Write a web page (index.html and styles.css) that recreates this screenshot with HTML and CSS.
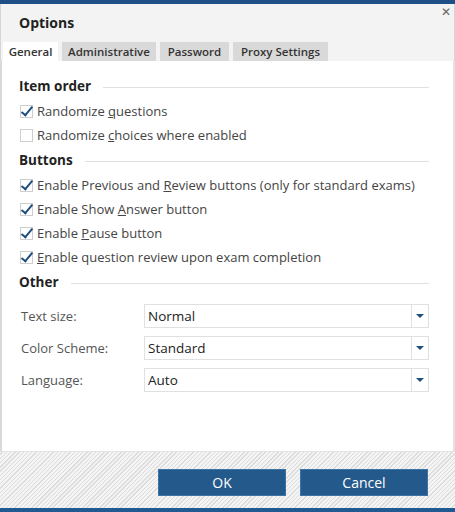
FILE: index.html
```html
<!DOCTYPE html>
<html lang="en">
<head>
    <meta charset="UTF-8">
    <meta name="viewport" content="width=device-width, initial-scale=1.0">
    <title>Options</title>
    <link rel="stylesheet" href="styles.css">
</head>
<body>

    <div class="topbar"></div>

    <div class="dialog">
        <!-- Header with title and tabs -->
        <div class="header">
            <div class="title-row">
                <h1>Options</h1>
                <span class="close">&#x2715;</span>
            </div>
            <div class="tabs">
                <div class="tab active tab-general">General</div>
                <div class="tab tab-admin">Administrative</div>
                <div class="tab tab-password">Password</div>
                <div class="tab tab-proxy">Proxy Settings</div>
            </div>
        </div>

        <!-- Tab content -->
        <div class="content">
            <div class="section-title"><span>Item order</span></div>
            <label class="check checked"><span class="box"></span><span>Randomize <u>q</u>uestions</span></label>
            <label class="check"><span class="box"></span><span>Randomize <u>c</u>hoices where enabled</span></label>

            <div class="section-title"><span>Buttons</span></div>
            <label class="check checked"><span class="box"></span><span>Enable Previous and <u>R</u>eview buttons (only for standard exams)</span></label>
            <label class="check checked"><span class="box"></span><span>Enable Show <u>A</u>nswer button</span></label>
            <label class="check checked"><span class="box"></span><span>Enable <u>P</u>ause button</span></label>
            <label class="check checked"><span class="box"></span><span><u>E</u>nable question review upon exam completion</span></label>

            <div class="section-title"><span>Other</span></div>
            <div class="form">
                <div class="form-row">
                    <span class="form-label">Text size:</span>
                    <div class="select"><span class="value">Normal</span><span class="arrow"></span></div>
                </div>
                <div class="form-row">
                    <span class="form-label">Color Scheme:</span>
                    <div class="select"><span class="value">Standard</span><span class="arrow"></span></div>
                </div>
                <div class="form-row">
                    <span class="form-label">Language:</span>
                    <div class="select"><span class="value">Auto</span><span class="arrow"></span></div>
                </div>
            </div>
        </div>

        <!-- Footer buttons -->
        <div class="footer">
            <button class="btn">OK</button>
            <button class="btn">Cancel</button>
        </div>
    </div>

    <div class="bottombar"></div>

</body>
</html>
```

FILE: styles.css
```css
html, body {
    margin: 0;
    padding: 0;
}
body {
    width: 455px;
    height: 512px;
    overflow: hidden;
    font-family: "Open Sans", "Noto Sans", sans-serif;
    background-color: #f3f3f3;
    display: flex;
    flex-direction: column;
}
.topbar {
    height: 4px;
    background-color: #1f4f86;
}
.bottombar {
    height: 4px;
    background-color: #1f5a92;
}
.dialog {
    flex: 1;
    display: flex;
    flex-direction: column;
}
.header {
    background-color: #f3f3f3;
    border-left: 1px solid #d6d6d6;
    border-right: 1px solid #d6d6d6;
}
.title-row {
    height: 38px;
    display: flex;
    justify-content: space-between;
    align-items: flex-start;
}
h1 {
    margin: 9px 0 0 18px;
    font-size: 14px;
    font-weight: 700;
    color: #222;
}
.close {
    margin: 1px 3px 0 0;
    font-size: 12px;
    color: #666;
    font-family: "DejaVu Sans", sans-serif;
}
.tabs {
    display: flex;
    gap: 4px;
    padding-left: 2px;
}
.tab {
    height: 19px;
    line-height: 19px;
    text-align: center;
    font-size: 11.5px;
    font-weight: 600;
    color: #333;
    background-color: #d9d9d9;
}
.tab.active {
    background-color: #fff;
}
.tab-general { width: 55px; }
.tab-admin { width: 94px; }
.tab-password { width: 69px; }
.tab-proxy { width: 95px; }
.content {
    height: 390px;
    background-color: #fff;
    border-left: 2px solid #d9d9d9;
    border-right: 2px solid #e2e2e2;
    padding: 12px 24px 0 17px;
    box-sizing: border-box;
}
.section-title {
    display: flex;
    align-items: center;
    gap: 12px;
    height: 26px;
    font-size: 13.5px;
    font-weight: 700;
    color: #222;
}
.section-title::after {
    content: "";
    flex: 1;
    border-top: 1px solid #e0e0e0;
    margin-top: 2px;
}
.check {
    display: flex;
    align-items: center;
    height: 24px;
    font-size: 13px;
    color: #444;
    white-space: nowrap;
}
.box {
    position: relative;
    width: 11px;
    height: 11px;
    border: 1px solid #cfcfcf;
    margin: 0 4px 0 1px;
    flex: none;
}
.check.checked .box::after {
    content: "";
    position: absolute;
    left: 3px;
    top: -2px;
    width: 4px;
    height: 10px;
    border-right: 2.5px solid #1d4f80;
    border-bottom: 2.5px solid #1d4f80;
    transform: rotate(40deg);
}
.form {
    display: flex;
    flex-direction: column;
    gap: 8px;
    padding-top: 9px;
}
.form-row {
    display: flex;
    align-items: center;
}
.form-label {
    width: 125px;
    box-sizing: border-box;
    padding-left: 2px;
    font-size: 13px;
    color: #555;
}
.select {
    flex: 1;
    height: 24px;
    display: flex;
    border: 1px solid #e0e0e0;
    box-sizing: border-box;
    font-size: 13.5px;
    color: #222;
}
.value {
    flex: 1;
    line-height: 22px;
    padding-left: 3px;
}
.arrow {
    width: 16px;
    border-left: 1px solid #e0e0e0;
    display: flex;
    align-items: center;
    justify-content: center;
}
.arrow::after {
    content: "";
    border-left: 4px solid transparent;
    border-right: 4px solid transparent;
    border-top: 4px solid #1d4f80;
}
.footer {
    flex: 1;
    display: flex;
    justify-content: flex-end;
    align-items: flex-start;
    gap: 14px;
    padding: 17px 27px 0 0;
    border-top: 1px solid #e4e4e4;
    background-color: #ededed;
    background-image: repeating-linear-gradient(-45deg, #f4f4f4 0, #f4f4f4 2px, #dcdcdc 2px, #dcdcdc 3px);
}
.btn {
    width: 128px;
    height: 27px;
    background-color: #245a8b;
    color: #fff;
    border: 1px solid #3d74a6;
    font-family: "Open Sans", "Noto Sans", sans-serif;
    font-size: 14px;
    cursor: pointer;
}
```
